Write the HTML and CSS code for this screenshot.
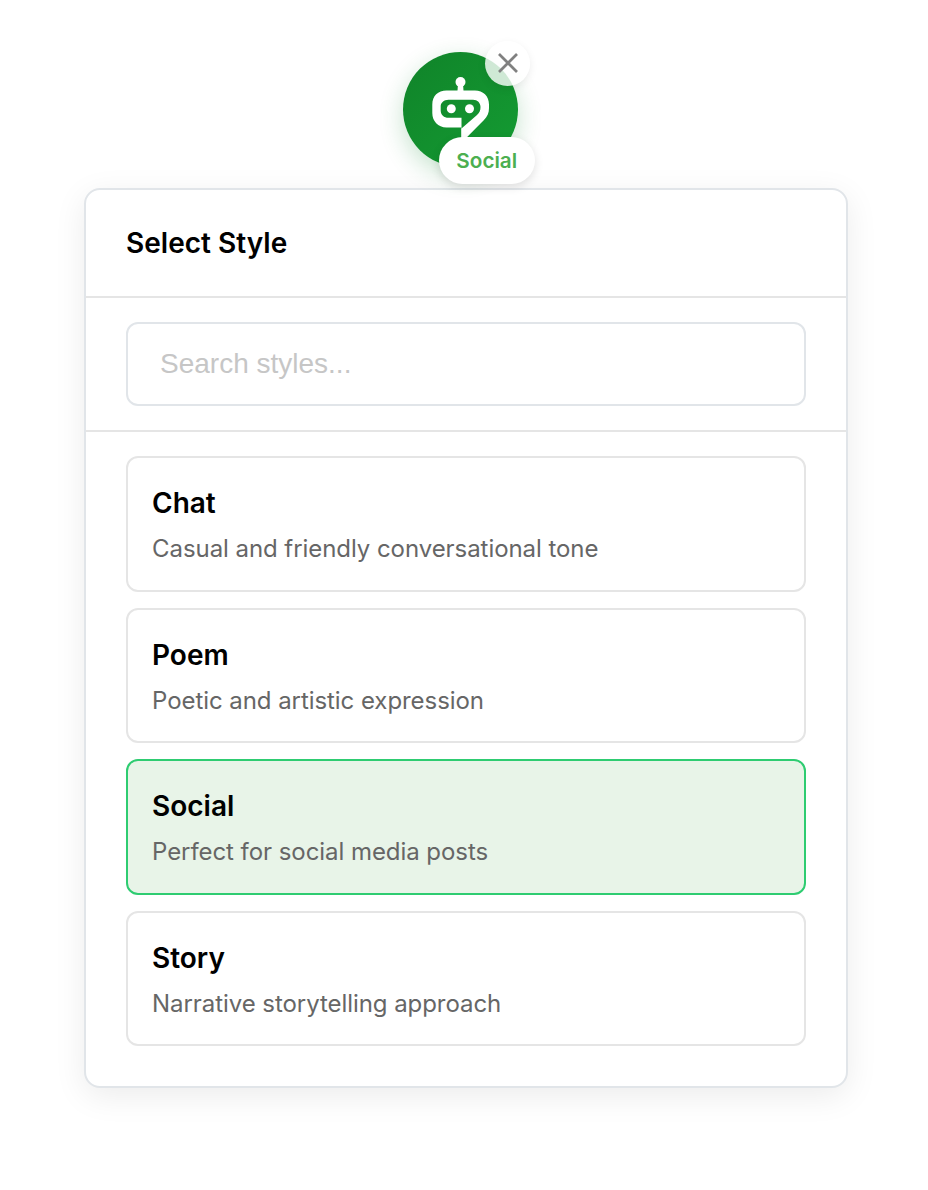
FILE: index.html
```html
<!DOCTYPE html>
<html lang="en">
<head>
<meta charset="utf-8">
<title>Select Style</title>
<link rel="stylesheet" href="styles.css">
</head>
<body>
<main class="page">
  <div class="launcher">
    <svg class="robot" viewBox="0 0 115 115" aria-hidden="true">
      <circle cx="57.5" cy="30" r="5"/>
      <path d="M55 32h5l.6 8h-6.2z"/>
      <path fill-rule="evenodd" d="M43.5 38.500H72C80 38.500 86 44 86 52.5V56C86 61 84.5 64.500 81 68L58.200 91V75.500H43.500C35 75.500 29.300 69 29.300 61V52.500C29.300 44 35 38.500 43.500 38.500ZM45.500 47.700C41 47.700 37.700 50.500 37.700 54.500V58.500C37.700 63 41 65.800 45.500 65.800H58.500V76.500L74 63C76.500 60.800 77.500 58.500 77.500 55C77.500 50.800 74.500 47.700 70 47.700Z"/>
      <circle cx="48.3" cy="56.700" r="4.500"/>
      <circle cx="66.500" cy="56.700" r="4.500"/>
    </svg>
    <button class="close" aria-label="Close">
      <svg class="close-icon" viewBox="0 0 20 20" aria-hidden="true"><path d="M1 1L19 19M19 1L1 19"/></svg>
    </button>
    <span class="badge">Social</span>
  </div>
  <section class="panel">
    <header class="panel-header"><h1 class="panel-title">Select Style</h1></header>
    <div class="search"><input class="search-input" type="text" placeholder="Search styles..."></div>
    <div class="styles">
      <article class="card"><h2 class="card-title">Chat</h2><p class="card-text">Casual and friendly conversational tone</p></article>
      <article class="card"><h2 class="card-title">Poem</h2><p class="card-text">Poetic and artistic expression</p></article>
      <article class="card card-selected"><h2 class="card-title">Social</h2><p class="card-text">Perfect for social media posts</p></article>
      <article class="card"><h2 class="card-title">Story</h2><p class="card-text">Narrative storytelling approach</p></article>
    </div>
  </section>
</main>
</body>
</html>
```
FILE: styles.css
```css
* { box-sizing: border-box; }
body { margin: 0; background: #fff; font-family: Inter, "Liberation Sans", sans-serif; }
h1, h2, p { margin: 0; }
.page { height: 1190px; padding: 52px 80px 0 84px; overflow: hidden; }
.launcher {
  position: relative;
  z-index: 1;
  width: 115px;
  height: 115px;
  margin: 0 0 21px 319px;
  border-radius: 50%;
  background: linear-gradient(135deg, #108329, #149c33);
  box-shadow: 0 8px 24px rgba(20, 140, 50, .24);
}
.robot { display: block; width: 115px; height: 115px; fill: #fff; }
.close {
  position: absolute;
  top: -11.5px;
  right: -12px;
  width: 45px;
  height: 45px;
  padding: 0;
  display: grid;
  place-items: center;
  border: 0;
  border-radius: 50%;
  background: rgba(255, 255, 255, .8);
  box-shadow: 0 3px 9px rgba(0, 0, 0, .08);
}
.close-icon { width: 20px; height: 20px; fill: none; stroke: #808080; stroke-width: 2.7; }
.badge {
  position: absolute;
  left: 36px;
  top: 85px;
  width: 95.5px;
  height: 47px;
  border-radius: 24px;
  background: #fff;
  box-shadow: 0 3px 10px rgba(0, 0, 0, .12);
  color: #4caf50;
  font-size: 20.7px;
  font-weight: 600;
  line-height: 47px;
  text-align: center;
}
.panel {
  width: 764px;
  height: 900px;
  border: 2px solid #e1e5e9;
  border-radius: 16px;
  background: #fff;
  box-shadow: 0 8px 32px rgba(0, 0, 0, .08);
}
.panel-header { height: 108px; padding: 36px 40px 0; border-bottom: 2px solid #e5e5e5; }
.panel-title { font-size: 28px; font-weight: 600; line-height: 34px; letter-spacing: .02px; }
.search { padding: 24px 40px; border-bottom: 2px solid #e5e5e5; }
.search-input {
  display: block;
  width: 100%;
  height: 84px;
  padding: 0 32px;
  border: 2px solid #e1e5e9;
  border-radius: 12px;
  background: #fff;
  font: 28px "Liberation Sans", Arial, sans-serif;
  outline: 0;
}
.search-input::placeholder { color: #c6c6c6; opacity: 1; }
.styles { display: flex; flex-direction: column; gap: 16px; padding: 24px 40px; }
.card { height: 135.6px; padding: 28px 24px 0; border: 2px solid #e5e5e5; border-radius: 12px; }
.card-selected { border-color: #2ecc71; background: #e8f4e8; }
.card-title { font-size: 28px; font-weight: 600; line-height: 34px; }
.card-text { margin-top: 14px; color: #666; font-size: 24px; line-height: 30px; letter-spacing: -.06px; }
```
